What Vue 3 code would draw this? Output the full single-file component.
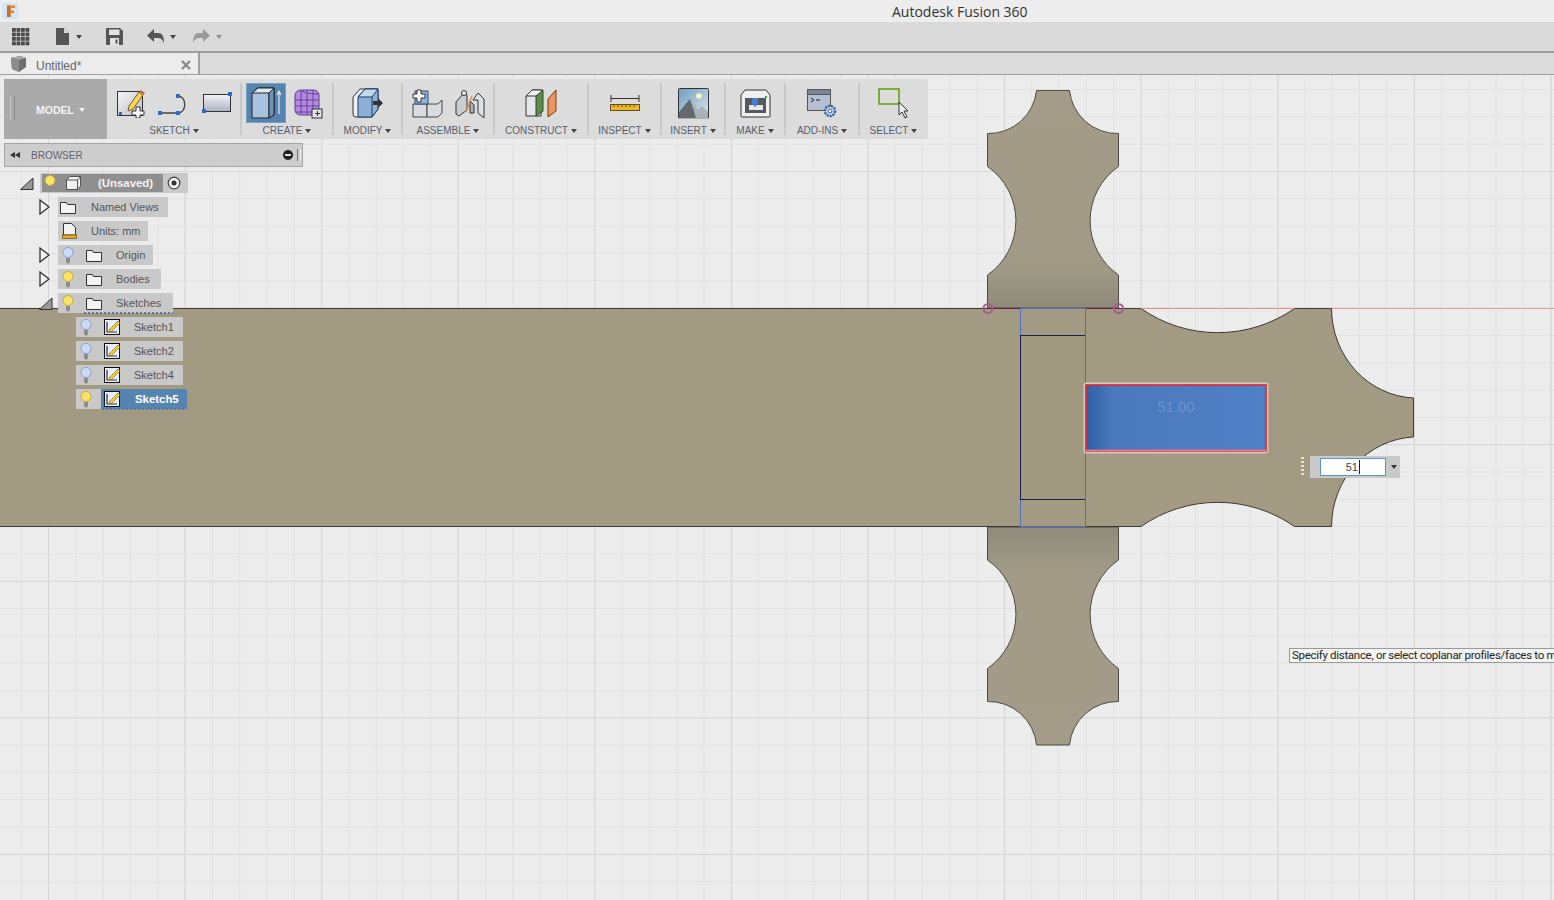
<script setup>
const ribbonGroups = [
  { label: 'SKETCH', icon: 'sketch', width: 134 },
  { label: 'CREATE', icon: 'create', width: 92 },
  { label: 'MODIFY', icon: 'modify', width: 69 },
  { label: 'ASSEMBLE', icon: 'assemble', width: 92 },
  { label: 'CONSTRUCT', icon: 'construct', width: 94 },
  { label: 'INSPECT', icon: 'inspect', width: 73 },
  { label: 'INSERT', icon: 'insert', width: 64 },
  { label: 'MAKE', icon: 'make', width: 60 },
  { label: 'ADD-INS', icon: 'addins', width: 74 },
  { label: 'SELECT', icon: 'select', width: 69 }
]

const treeRows = [
  { name: '(Unsaved)', depth: 0, arrow: 'open', bulb: 'on', icon: 'cube', root: true, pad: 10 },
  { name: 'Named Views', depth: 1, arrow: 'closed', icon: 'folder', pad: 9 },
  { name: 'Units: mm', depth: 1, icon: 'units', pad: 7 },
  { name: 'Origin', depth: 1, arrow: 'closed', bulb: 'off', icon: 'folder', pad: 8 },
  { name: 'Bodies', depth: 1, arrow: 'closed', bulb: 'on', icon: 'folder', pad: 11 },
  { name: 'Sketches', depth: 1, arrow: 'open', bulb: 'on', icon: 'folder', busy: true, pad: 12 },
  { name: 'Sketch1', depth: 2, bulb: 'off', icon: 'sketch', pad: 9 },
  { name: 'Sketch2', depth: 2, bulb: 'off', icon: 'sketch', pad: 9 },
  { name: 'Sketch4', depth: 2, bulb: 'off', icon: 'sketch', pad: 9 },
  { name: 'Sketch5', depth: 2, bulb: 'on', icon: 'sketch', active: true, busy: true, pad: 8 }
]

const launcherCells = []
for (let r = 0; r < 4; r++) {
  for (let c = 0; c < 4; c++) launcherCells.push({ x: c * 4.5, y: r * 4.5 })
}
</script>

<template>
  <div class="app">
    <div class="titlebar">
      <svg class="logo" width="16" height="16" viewBox="0 0 16 16">
        <rect width="16" height="16" fill="#d4e6f3" />
        <path d="M5 2.500h8v2.500H8.500v2.500H12V10H8.500v4H5z" fill="#e8852a" />
        <path d="M5 2.500h3.500V14H5z" fill="#cf6c1e" />
      </svg>
      <span class="title">Autodesk Fusion 360</span>
    </div>

    <div class="toolbar">
      <svg class="launcher" width="18" height="18" viewBox="0 0 18 18">
        <rect v-for="(cell, i) in launcherCells" :key="i" :x="cell.x" :y="cell.y" width="3.800" height="3.800" fill="#4a4a4a" />
      </svg>
      <svg class="tb-file" width="14" height="17" viewBox="0 0 14 17">
        <path d="M0 0h8l5 5v12H0z" fill="#555" />
        <path d="M8 0l5 5H8z" fill="#d9d9d9" />
      </svg>
      <i class="caret tb-caret"></i>
      <svg class="tb-save" width="17" height="17" viewBox="0 0 17 17">
        <path d="M1 0h13l3 3v13a1 1 0 0 1-1 1H1a1 1 0 0 1-1-1V1a1 1 0 0 1 1-1z" fill="#555" />
        <rect x="3" y="1.500" width="10.500" height="5.500" fill="#e3e3e3" />
        <rect x="4" y="10" width="9" height="7" fill="#e3e3e3" />
        <rect x="9.500" y="11.500" width="2" height="4" fill="#555" />
      </svg>
      <svg class="tb-undo" width="17" height="15" viewBox="0 0 17 15">
        <path d="M7 0v4h4c4 0 6 3 6 10-1.500-3.500-3-5-6-5H7v4L0 6.500z" fill="#555" />
      </svg>
      <i class="caret tb-caret"></i>
      <svg class="tb-redo" width="17" height="15" viewBox="0 0 17 15">
        <path d="M10 0v4H6C2 4 0 7 0 14c1.500-3.500 3-5 6-5h4v4l7-6.500z" fill="#999" />
      </svg>
      <i class="caret tb-caret pale"></i>
    </div>

    <div class="tabbar">
      <div class="tab">
        <svg width="17" height="16" viewBox="0 0 17 16">
          <path d="M1 2l9-2 6 2v9l-7 5-7-3z" fill="#6d6d6d" />
          <path d="M1 2l8 2 7-2-6-2z" fill="#a8a8a8" />
          <path d="M1 2l8 2v12l-7-3z" fill="#8c8c8c" />
        </svg>
        <span class="tab-name">Untitled*</span>
        <svg class="tab-close" width="10" height="10" viewBox="0 0 10 10">
          <path d="M1 1l8 8M9 1l-8 8" stroke="#8a8a8a" stroke-width="2.400" />
        </svg>
      </div>
    </div>

    <div class="canvas">
      <svg class="model" width="1554" height="825" viewBox="0 75 1554 825">
        <defs>
          <linearGradient id="lobeTop" x1="0" y1="0" x2="0" y2="1">
            <stop offset="0" stop-color="#a49c88" />
            <stop offset="0.8" stop-color="#a19a86" />
            <stop offset="1" stop-color="#8f8a7b" />
          </linearGradient>
          <linearGradient id="lobeBottom" x1="0" y1="0" x2="0" y2="1">
            <stop offset="0" stop-color="#8f8a7b" />
            <stop offset="0.2" stop-color="#a19a86" />
            <stop offset="1" stop-color="#a49c88" />
          </linearGradient>
          <linearGradient id="faceBlue" x1="0" y1="0" x2="1" y2="0">
            <stop offset="0" stop-color="#2f60a8" />
            <stop offset="0.15" stop-color="#4a78bc" />
            <stop offset="1" stop-color="#5080c6" />
          </linearGradient>
        </defs>

        <path
          d="M987.500 308V275A66 66 0 0 0 987.500 166.500V133.500A48 48 0 0 0 1036.500 90.500H1069.500A48 48 0 0 0 1118.500 133.500V166.500A66 66 0 0 0 1118.500 275V308Z"
          fill="url(#lobeTop)" stroke="#4e4b42" stroke-width="1"
        />
        <path
          d="M987.500 527V560A66 66 0 0 1 987.500 668.500V701.500A48 48 0 0 1 1036.500 745H1069.500A48 48 0 0 1 1118.500 701.500V668.500A66 66 0 0 1 1118.500 560V527Z"
          fill="url(#lobeBottom)" stroke="#4e4b42" stroke-width="1"
        />
        <path
          d="M-2 308.500H1141A134 134 0 0 0 1294.500 308.500H1331.500A86 90 0 0 0 1413.500 398V437A86 90 0 0 0 1331.500 526.500H1294.500A134 134 0 0 0 1141 526.500H-2Z"
          fill="#a39a83" stroke="#3c3a33" stroke-width="1"
        />
        <line x1="1141" y1="308.500" x2="1294" y2="308.500" stroke="#ee8d8d" />
        <line x1="1332" y1="308.500" x2="1554" y2="308.500" stroke="#f29a9a" />

        <line x1="988" y1="308.500" x2="1118" y2="308.500" stroke="#6b2040" />
        <rect x="1020.500" y="308.500" width="65" height="218" fill="none" stroke="#4f72c0" />
        <rect x="1020.500" y="335.500" width="65" height="164" fill="#a0987f" stroke="#16204a" />
        <line x1="1085.500" y1="308.500" x2="1085.500" y2="526.500" stroke="#666d86" />
        <circle cx="988" cy="308.500" r="4.500" fill="none" stroke="#a85c92" stroke-width="2" />
        <circle cx="1118.500" cy="308.500" r="4.500" fill="none" stroke="#a85c92" stroke-width="2" />

        <rect x="1084.500" y="383.500" width="183" height="69" rx="2" fill="none" stroke="#d6c9bd" stroke-width="2" />
        <rect x="1086" y="385" width="180" height="66" fill="url(#faceBlue)" stroke="#f01c2c" stroke-width="1.500" />
        <line x1="1086" y1="450.500" x2="1266" y2="450.500" stroke="#f0808c" stroke-width="1.500" />
        <text x="1176" y="412" text-anchor="middle" class="face-text">51.00</text>
      </svg>

      <div class="overlay">
        <div class="ribbon">
          <div class="model-btn">
            <i class="grip"></i>
            <span>MODEL</span>
            <i class="caret white"></i>
          </div>
          <div
            v-for="group in ribbonGroups"
            :key="group.label"
            class="group"
            :style="{ width: group.width + 'px' }"
          >
            <div class="group-icons">
              <template v-if="group.icon === 'sketch'">
                <svg width="30" height="30" viewBox="0 0 30 30">
                  <defs>
                    <linearGradient id="sketchPaper" x1="0" y1="0" x2="1" y2="1">
                      <stop offset="0" stop-color="#f6f6f8" />
                      <stop offset="1" stop-color="#b8bdca" />
                    </linearGradient>
                  </defs>
                  <rect x="1.500" y="3.500" width="25" height="24" fill="url(#sketchPaper)" stroke="#333" />
                  <path d="M13 18L23 4l4 3-10 14-5 2z" fill="#f7d65a" stroke="#7a5a1a" />
                  <path d="M23 4l2-2 4 3-2 2z" fill="#c9694a" />
                  <rect x="3" y="24" width="3" height="3" fill="#2f6cc8" />
                  <path d="M20 19h4v4h4v4h-4v3h-4v-3h-4v-4h4z" fill="#fff" stroke="#333" />
                </svg>
                <svg width="32" height="28" viewBox="0 0 32 28">
                  <path d="M2 24h18c9 0 9-17 0-17" fill="none" stroke="#444" stroke-width="1.300" />
                  <rect x="0" y="22" width="4" height="4" fill="#2f6cc8" />
                  <rect x="18" y="22" width="4" height="4" fill="#2f6cc8" />
                  <rect x="18" y="5" width="4" height="4" fill="#2f6cc8" />
                </svg>
                <svg width="31" height="24" viewBox="0 0 31 24">
                  <defs>
                    <linearGradient id="sketchRect" x1="0" y1="0" x2="0" y2="1">
                      <stop offset="0" stop-color="#f4f4f6" />
                      <stop offset="1" stop-color="#aab1c4" />
                    </linearGradient>
                  </defs>
                  <rect x="1.500" y="3.500" width="27" height="17" fill="url(#sketchRect)" stroke="#333" />
                  <rect x="0" y="18" width="4" height="4" fill="#2f6cc8" />
                  <rect x="26" y="1" width="4" height="4" fill="#2f6cc8" />
                </svg>
              </template>

              <template v-else-if="group.icon === 'create'">
                <div class="create-active">
                  <svg width="32" height="34" viewBox="0 0 32 34">
                    <path d="M2 7l6-5h16v27l-5 3H2z" fill="#a8c2df" stroke="#222" />
                    <path d="M19 7v25" stroke="#222" />
                    <path d="M19 7l5-5v27l-5 3z" fill="#6f94bd" stroke="#222" />
                    <path d="M2 7l6-5h16l-5 5z" fill="#dce7f2" stroke="#222" />
                    <path d="M29 28V6M27 9l2-4 2 4" fill="none" stroke="#dfe7ef" stroke-width="1.200" />
                  </svg>
                </div>
                <svg width="31" height="31" viewBox="2 0 31 31">
                  <path d="M3 8q0-6 7-6h11q6 0 6 6v13q0 6-6 6H9q-6 0-6-6z" fill="#b48be0" stroke="#5e3d91" />
                  <path d="M3 12h24M3 18h24M3 24h22M9 3v23M15 2v25M21 2v25M9 3q6 3 18 3" fill="none" stroke="#5e3d91" stroke-width="0.900" />
                  <rect x="20" y="21" width="10" height="9" fill="#e6e6e6" stroke="#333" />
                  <path d="M23 25.500h5M25.500 23v5" stroke="#333" />
                </svg>
              </template>

              <svg v-else-if="group.icon === 'modify'" width="31" height="32" viewBox="0 0 31 32">
                <path d="M1 10l7-8h18v20l-6 8H4q-3 0-3-3z" fill="#eceff3" stroke="#333" />
                <path d="M6 10l7-8h13v20l-6 8H6z" fill="#8db0d8" stroke="#1f3c66" />
                <path d="M6 10h14l6-8H13z" fill="#c4d8ee" stroke="#1f3c66" />
                <path d="M20 10v20" stroke="#1f3c66" />
                <path d="M21 14h5v-3l5 5-5 5v-3h-5z" fill="#333" />
              </svg>

              <template v-else-if="group.icon === 'assemble'">
                <svg width="31" height="29" viewBox="0 0 31 29">
                  <path d="M1 15h14v13H1z" fill="#d8dbe0" stroke="#444" />
                  <path d="M15 15h11l4-4v13l-4 4H15z" fill="#d8dbe0" stroke="#444" />
                  <path d="M3 15V2h13v13z" fill="#8fb2da" stroke="#2f4f7a" />
                  <path d="M5 1h4v4h4v4H9v4H5V9H1V5h4z" fill="#fff" stroke="#333" />
                </svg>
                <svg width="30" height="29" viewBox="0 0 30 29">
                  <path d="M1 13l8-9 3 2v15l-8 6-3-2z" fill="#c9ccd2" stroke="#333" />
                  <path d="M18 11l5-7 6 6v19l-6-5V11z" fill="#dde0e4" stroke="#333" />
                  <path d="M15 12v12h4V16z" fill="#aeb2b8" stroke="#333" />
                  <circle cx="9" cy="4" r="2.500" fill="#eee" stroke="#333" />
                  <path d="M17 7l-6 16" stroke="#e8852a" stroke-width="1.200" />
                </svg>
              </template>

              <svg v-else-if="group.icon === 'construct'" width="32" height="30" viewBox="0 0 32 30">
                <path d="M1 8l6-6h9v26H1z" fill="#e4e6ea" stroke="#333" />
                <path d="M11 8l7-6v21l-7 5z" fill="#5d8c4a" stroke="#2b4a22" />
                <path d="M1 8h10l7-6H7z" fill="#f2f3f5" stroke="#333" />
                <path d="M23 11l8-9v21l-8 6z" fill="#e8975e" stroke="#7a3a12" />
              </svg>

              <svg v-else-if="group.icon === 'inspect'" width="30" height="18" viewBox="0 0 30 18">
                <path d="M1 1v7M29 1v7" stroke="#333" />
                <path d="M1 4.500h28" stroke="#333" />
                <rect x="0.500" y="10.500" width="29" height="6" fill="#eab72e" stroke="#6a4d12" />
                <path d="M4 11v2M8 11v2M12 11v2M16 11v2M20 11v2M24 11v2" stroke="#6a4d12" />
              </svg>

              <svg v-else-if="group.icon === 'insert'" width="31" height="31" viewBox="0 0 31 31">
                <defs>
                  <linearGradient id="insertSky" x1="0" y1="0" x2="1" y2="1">
                    <stop offset="0" stop-color="#6f9dbf" />
                    <stop offset="1" stop-color="#dce8f0" />
                  </linearGradient>
                </defs>
                <rect x="0.500" y="0.500" width="30" height="30" rx="1" fill="url(#insertSky)" stroke="#333" />
                <circle cx="21" cy="8" r="2.800" fill="#fff3b8" />
                <path d="M1 24l11-13 8 11 4-4 6 6v7H1z" fill="#aab1b8" />
                <path d="M1 30v-6l11-13 6 19z" fill="#62686d" />
              </svg>

              <svg v-else-if="group.icon === 'make'" width="31" height="29" viewBox="0 0 31 29">
                <path d="M5 1h21l4 5v21a1 1 0 0 1-1 1H2a1 1 0 0 1-1-1V6z" fill="#f0f0f0" stroke="#333" />
                <rect x="5" y="9" width="21" height="15" fill="#55595e" />
                <rect x="9" y="16" width="14" height="5" fill="#e6e8ec" />
                <path d="M12 9h6v6l-3 3-3-3z" fill="#3f82cf" />
                <rect x="25" y="7" width="2" height="2" fill="#3ea33a" />
              </svg>

              <svg v-else-if="group.icon === 'addins'" width="30" height="30" viewBox="0 0 30 30">
                <rect x="0.500" y="1.500" width="23" height="21" fill="#b6bfd2" stroke="#555" />
                <rect x="0.500" y="1.500" width="23" height="5" fill="#7d8696" stroke="#555" />
                <path d="M4 10l3 2-3 2M9 12h4" fill="none" stroke="#222" />
                <circle cx="23" cy="23" r="5" fill="#cfdcf0" stroke="#2f5f9e" stroke-width="2.500" stroke-dasharray="2 1" />
                <circle cx="23" cy="23" r="2" fill="#fff" stroke="#2f5f9e" />
              </svg>

              <svg v-else-if="group.icon === 'select'" width="31" height="31" viewBox="0 0 31 31">
                <rect x="1" y="1" width="20" height="15" fill="none" stroke="#5aa000" stroke-width="1.500" />
                <path d="M21 14v13l3-3 3 6 2-1-3-6h4z" fill="#eee" stroke="#333" />
              </svg>
            </div>
            <div class="group-label">{{ group.label }}<i class="caret"></i></div>
          </div>
        </div>

        <div class="browser">
          <i class="rewind"></i><i class="rewind"></i>
          <span class="browser-title">BROWSER</span>
          <span class="minus"></span>
          <i class="browser-grip"></i>
        </div>

        <div class="tree">
          <div v-for="row in treeRows" :key="row.name" class="line" :class="'depth' + row.depth">
            <div class="arrow-slot">
              <svg v-if="row.arrow === 'closed'" width="11" height="16" viewBox="0 0 11 16">
                <path d="M1 1l9 7-9 7z" fill="#f4f4f4" stroke="#333" stroke-width="1.300" />
              </svg>
              <svg v-else-if="row.arrow === 'open'" width="14" height="13" viewBox="0 0 14 13">
                <path d="M0.500 12.500L13 1v11.500z" fill="#999" stroke="#333" />
              </svg>
            </div>
            <div class="pill" :class="{ root: row.root }">
              <div class="pill-main" :class="{ active: row.active, busy: row.busy }">
                <span class="bulb-slot" v-if="row.bulb">
                  <svg width="12" height="17" viewBox="0 0 12 17">
                    <circle cx="6" cy="5.500" r="5" :fill="row.bulb === 'on' ? '#f8e468' : '#cddcf8'" :stroke="row.bulb === 'on' ? '#c9ab30' : '#86a0cf'" />
                    <path d="M4 11h4v4l-1 1.500H5l-1-1.500z" fill="#8d8d8d" />
                  </svg>
                </span>
                <span class="icon-slot" :class="{ 'no-bulb': !row.bulb, units: row.icon === 'units' }">
                  <svg v-if="row.icon === 'folder'" width="16" height="13" viewBox="0 0 16 13">
                    <path d="M0.500 12.500V1.500h6l1 2h8v9z" fill="#f2f2f2" stroke="#333" />
                  </svg>
                  <svg v-else-if="row.icon === 'cube'" width="15" height="14" viewBox="0 0 15 14">
                    <path d="M0.500 4L4 0.500h10.500V10l-3 3.500h-11z" fill="#f2f2f2" stroke="#555" />
                    <path d="M0.500 4h11l3-3.500M11.500 4v9.500" fill="none" stroke="#555" />
                  </svg>
                  <svg v-else-if="row.icon === 'units'" width="15" height="16" viewBox="0 0 15 16">
                    <path d="M1.500 12V0.500h8l4 4V12z" fill="#f2f2f2" stroke="#333" />
                    <rect x="0.500" y="12" width="14" height="3.500" fill="#e0ac28" stroke="#7a5a12" stroke-width="0.800" />
                  </svg>
                  <svg v-else width="17" height="16" viewBox="0 0 17 16">
                    <rect x="0.500" y="0.500" width="15" height="15" fill="#e6eefb" stroke="#111" />
                    <path d="M3 3v10h10" fill="none" stroke="#2a2a2a" stroke-width="1.200" />
                    <path d="M5 11L14 2l2 2-9 9z" fill="#f6c93a" stroke="#7a5a12" stroke-width="0.600" />
                  </svg>
                </span>
                <span class="row-name" :style="{ paddingRight: row.pad + 'px' }">{{ row.name }}</span>
              </div>
              <svg v-if="row.root" class="radio" width="14" height="14" viewBox="0 0 14 14">
                <circle cx="7" cy="7" r="5.800" fill="#f2f2f2" stroke="#444" stroke-width="1.200" />
                <circle cx="7" cy="7" r="2.500" fill="#333" />
              </svg>
            </div>
          </div>
        </div>
      </div>

      <div class="dim-input">
        <i class="dim-grip"></i>
        <div class="dim-box">
          <div class="dim-field"><span>51</span><i class="text-cursor"></i></div>
          <i class="caret dark"></i>
        </div>
      </div>

      <div class="hint">Specify distance, or select coplanar profiles/faces to m</div>
    </div>
  </div>
</template>

<style>
html, body {
  margin: 0;
  overflow: hidden;
}
</style>

<style scoped>
.app {
  width: 1554px;
  height: 900px;
  display: flex;
  flex-direction: column;
  overflow: hidden;
  font-family: "Liberation Sans", Arial, sans-serif;
  background: #ececec;
}

.titlebar {
  height: 22px;
  position: relative;
  background: #ededed;
}
.logo {
  position: absolute;
  left: 2px;
  top: 3px;
}
.title {
  position: absolute;
  left: 892px;
  top: 3px;
  font-family: "Open Sans", sans-serif;
  font-size: 14px;
  line-height: 18px;
  color: #333;
  white-space: nowrap;
}

.toolbar {
  height: 29px;
  display: flex;
  align-items: center;
  background: #dadada;
  border-bottom: 2px solid #9c9c9c;
}
.launcher { margin-left: 12px; }
.tb-file { margin-left: 26px; }
.tb-save { margin-left: 24px; }
.tb-undo { margin-left: 24px; }
.tb-redo { margin-left: 17px; }

.caret {
  display: inline-block;
  width: 0;
  height: 0;
  border-left: 3.500px solid transparent;
  border-right: 3.500px solid transparent;
  border-top: 4px solid #444;
}
.caret.white { border-top-color: #f4f4f4; }
.caret.dark { border-top-color: #333; }
.tb-caret { margin-left: 6px; }
.tb-caret.pale { border-top-color: #8c8c8c; }

.tabbar {
  height: 21px;
  display: flex;
  background: #dcdcdc;
  border-bottom: 1px solid #a0a0a0;
}
.tab {
  width: 198px;
  height: 21px;
  display: flex;
  align-items: center;
  background: #ececec;
  border-right: 2px solid #a0a0a0;
}
.tab svg { margin-left: 10px; }
.tab-name {
  margin-left: 9px;
  margin-top: 5px;
  flex: 1;
  font-size: 12px;
  color: #5f6470;
}
.tab svg.tab-close {
  margin-left: 0;
  margin-top: 2px;
  margin-right: 7px;
}

.canvas {
  flex: 1;
  position: relative;
  overflow: hidden;
  background-color: #ececec;
  background-image:
    linear-gradient(to right, #d6d6d6 1px, transparent 1px),
    linear-gradient(to bottom, #d6d6d6 1px, transparent 1px),
    linear-gradient(to right, #e2e2e2 1px, transparent 1px),
    linear-gradient(to bottom, #e2e2e2 1px, transparent 1px);
  background-size: 136.6px 136.6px, 136.6px 136.6px, 27.32px 27.32px, 27.32px 27.32px;
  background-position: 48px 0, 0 96px, 48px 0, 0 96px;
}
.model {
  position: absolute;
  left: 0;
  top: 0;
  display: block;
}
.face-text {
  font-family: "Liberation Sans", Arial, sans-serif;
  font-size: 15px;
  fill: #6d94cf;
}

.overlay {
  position: absolute;
  left: 4px;
  top: 4px;
  display: flex;
  flex-direction: column;
}

.ribbon {
  width: 924px;
  height: 60px;
  display: flex;
  background: #dcdcdc;
}
.model-btn {
  width: 103px;
  display: flex;
  align-items: center;
  justify-content: center;
  gap: 5px;
  position: relative;
  background: #aaaaaa;
  color: #f4f4f4;
  font-size: 10.5px;
  font-weight: bold;
  padding: 1px 0 0 10px;
  box-sizing: border-box;
}
.grip {
  position: absolute;
  left: 6px;
  top: 17px;
  width: 3px;
  height: 24px;
  border-left: 1px solid #c4c4c4;
  border-right: 1px solid #8e8e8e;
}
.group {
  display: flex;
  flex-direction: column;
  align-items: center;
  position: relative;
}
.group + .group::before {
  content: "";
  position: absolute;
  left: -1px;
  top: 4px;
  width: 2px;
  height: 52px;
  background: #c8c8c8;
}
.group-icons {
  height: 45px;
  padding-top: 3px;
  box-sizing: border-box;
  display: flex;
  align-items: center;
  justify-content: center;
  gap: 12px;
}
.create-active {
  width: 40px;
  height: 40px;
  margin-left: -4px;
  margin-right: -4px;
  display: flex;
  align-items: center;
  justify-content: center;
  background: #5684b0;
  border: 1px solid #7ba0c4;
  box-sizing: border-box;
}
.group-label {
  font-size: 10px;
  line-height: 14px;
  color: #565c6c;
  display: flex;
  align-items: center;
  gap: 3px;
}

.browser {
  width: 299px;
  height: 24px;
  margin-top: 4px;
  display: flex;
  align-items: center;
  background: #cdcdcd;
  border: 1px solid #a4a4a4;
  box-sizing: border-box;
  padding-left: 5px;
}
.rewind {
  width: 0;
  height: 0;
  border-top: 3px solid transparent;
  border-bottom: 3px solid transparent;
  border-right: 5px solid #333;
}
.browser-title {
  margin-left: 11px;
  flex: 1;
  font-size: 10px;
  color: #5f6470;
}
.minus {
  width: 10px;
  height: 10px;
  position: relative;
  border-radius: 50%;
  background: #222;
  margin-right: 4px;
}
.minus::after {
  content: "";
  position: absolute;
  left: 2px;
  top: 4px;
  width: 6px;
  height: 2px;
  background: #ddd;
}
.browser-grip {
  width: 2px;
  height: 12px;
  margin-right: 1px;
  border-left: 1px solid #777;
  border-right: 1px solid #eee;
}

.tree {
  margin-top: 6px;
  display: flex;
  flex-direction: column;
  gap: 4px;
  align-items: flex-start;
}
.line {
  height: 20px;
  display: flex;
  align-items: center;
}
.depth0 { padding-left: 16px; }
.depth1 { padding-left: 34px; }
.depth2 { padding-left: 52px; }
.arrow-slot {
  width: 20px;
  height: 20px;
  display: flex;
  align-items: center;
}
.depth1 .arrow-slot {
  padding-left: 1px;
  box-sizing: border-box;
}
.pill {
  height: 20px;
  display: flex;
  align-items: center;
  background: #c9c9c9;
}
.pill.root {
  padding: 0 7px 0 2px;
  gap: 4px;
}
.pill-main {
  height: 20px;
  display: flex;
  align-items: center;
  position: relative;
  font-size: 11px;
  color: #555;
}
.root .pill-main {
  height: 18px;
  background: #8f8f8f;
  color: #f2f2f2;
  font-size: 11.4px;
  font-weight: bold;
}
.pill-main.active {
  color: #fff;
  font-size: 11.4px;
  font-weight: bold;
}
.pill-main.active .row-name,
.pill-main.active .icon-slot {
  background: #5684b0;
}
.pill-main.active .row-name { padding-left: 1px; }
.pill-main.busy::after {
  content: "";
  position: absolute;
  left: 26px;
  right: 0;
  bottom: -1px;
  height: 2px;
  background-image: repeating-linear-gradient(to right, #5b78a8 0 2px, transparent 2px 4px);
}
.bulb-slot {
  width: 20px;
  display: flex;
  justify-content: center;
  padding-top: 1px;
}
.depth0 .bulb-slot { width: 16px; }
.depth2 .bulb-slot {
  width: 25px;
  justify-content: flex-start;
  padding-left: 4px;
  box-sizing: border-box;
}
.icon-slot {
  height: 20px;
  width: 38px;
  padding-left: 8px;
  display: flex;
  align-items: center;
  box-sizing: border-box;
}
.icon-slot.no-bulb {
  width: 33px;
  padding-left: 2px;
}
.icon-slot.units { padding-left: 4px; }
.depth0 .icon-slot {
  width: 40px;
  padding-left: 8px;
}
.depth2 .icon-slot {
  width: 33px;
  padding-left: 3px;
}
.row-name {
  height: 20px;
  display: flex;
  align-items: center;
  white-space: nowrap;
}
.root .row-name,
.root .icon-slot { height: 18px; }
.radio { display: block; }

.dim-input {
  position: absolute;
  left: 1301px;
  top: 381px;
  display: flex;
  align-items: center;
  gap: 6px;
}
.dim-grip {
  width: 3px;
  height: 20px;
  background-image: repeating-linear-gradient(to bottom, #e4e0d4 0 2px, transparent 2px 4px);
}
.dim-box {
  width: 90px;
  height: 22px;
  display: flex;
  align-items: center;
  background: #c9c9c9;
  padding-left: 10px;
  box-sizing: border-box;
}
.dim-field {
  width: 66px;
  height: 18px;
  display: flex;
  align-items: center;
  justify-content: flex-end;
  padding-right: 25px;
  box-sizing: border-box;
  background: #fff;
  border: 1px solid #5a94d8;
  font-size: 11px;
  color: #444;
}
.text-cursor {
  width: 1px;
  height: 14px;
  margin-left: 1px;
  background: #222;
}
.dim-box .caret { margin-left: 5px; }

.hint {
  position: absolute;
  left: 1289px;
  right: 0;
  top: 573px;
  height: 15px;
  line-height: 13px;
  padding-left: 2px;
  box-sizing: border-box;
  background: #f4f4f4;
  border: 1px solid #9a9a9a;
  border-right: none;
  font-family: Roboto, "Liberation Sans", sans-serif;
  font-size: 11.5px;
  letter-spacing: -0.3px;
  color: #222;
  white-space: nowrap;
  overflow: hidden;
}
</style>
